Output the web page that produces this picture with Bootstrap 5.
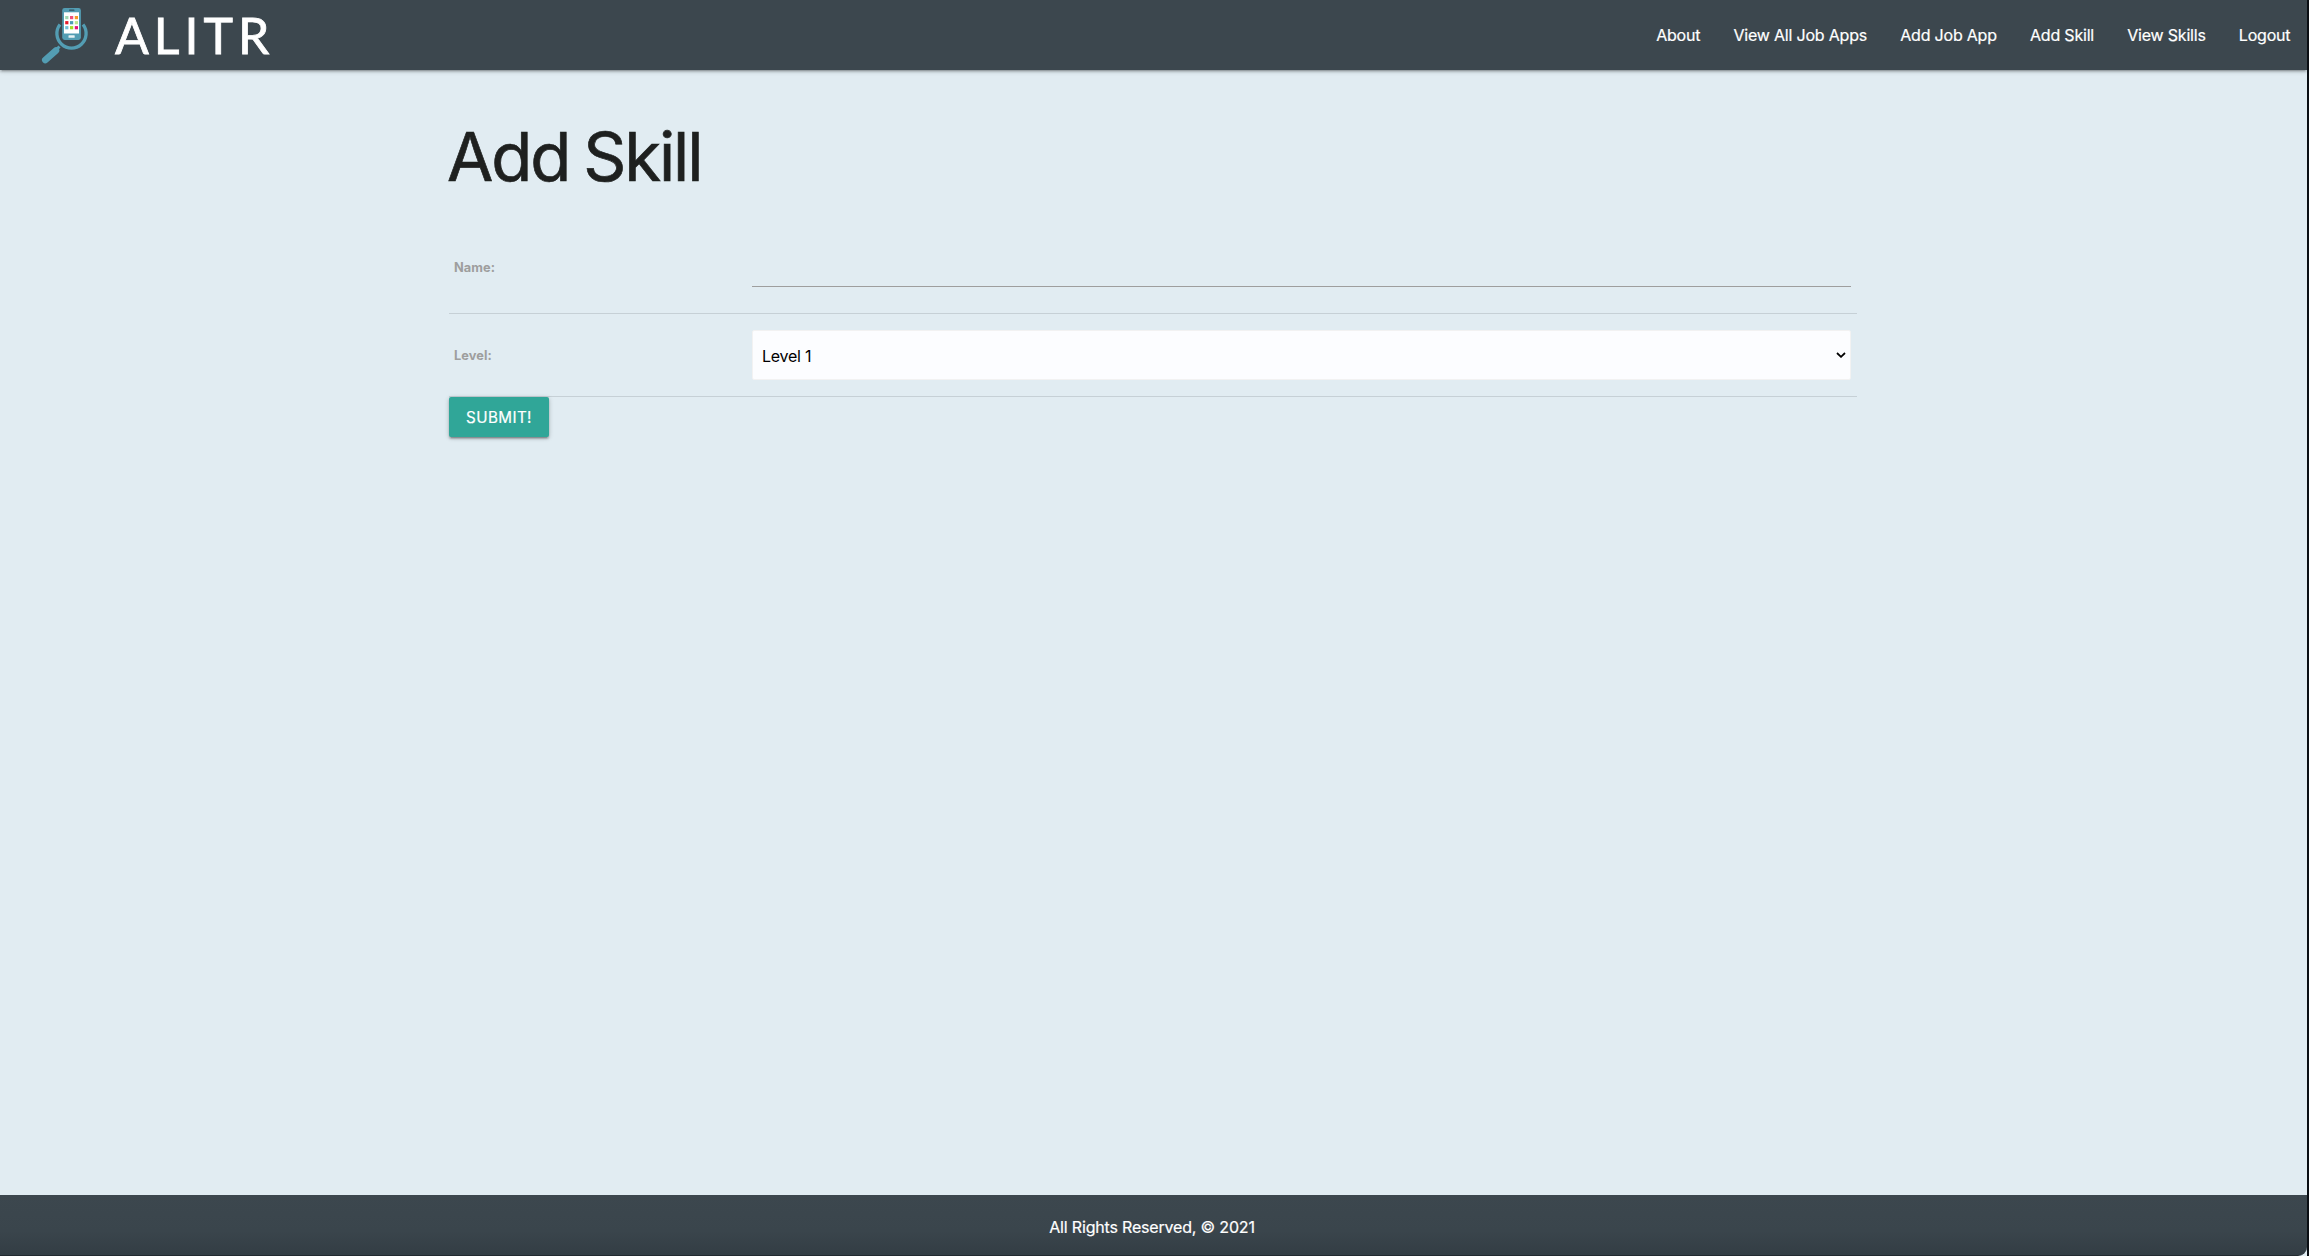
<!DOCTYPE html>
<html lang="en">
<head>
<meta charset="utf-8">
<meta name="viewport" content="width=device-width, initial-scale=1">
<title>ALITR - Add Skill</title>
<link rel="stylesheet" href="https://cdn.jsdelivr.net/npm/bootstrap@5.3.0/dist/css/bootstrap.min.css">
<style>
body{background:#e1ecf2;font-family:Inter,"Liberation Sans",sans-serif;font-size:16px;color:#1e201f;border-right:2px solid #0b0f14;letter-spacing:-.2px}
.topbar{background:#3c474e;height:70px;padding:0 0 0 30px;box-shadow:0 2px 2px rgba(0,0,0,.14),0 3px 1px -2px rgba(0,0,0,.12),0 1px 5px rgba(0,0,0,.2)}
.logo-mark{width:70px;height:70px;flex:none}
.brand-word{font-family:Lato,sans-serif;font-size:50px;line-height:70px;letter-spacing:5px;margin-left:15px;-webkit-text-stroke:.8px #fff}
.topbar .nav-link{padding:0 16.6px;line-height:70px;color:#fff;white-space:nowrap;-webkit-text-stroke:.2px #fff}
.page-col{width:1408px;margin-left:449px}
.page-title{font-size:67.2px;line-height:74px;font-weight:400;margin:50px 0 -1px -2px;letter-spacing:-2.1px;word-spacing:-3px;-webkit-text-stroke:.7px #1e201f}
.field-row{border-bottom:1px solid #c6d0d6;padding:0 6px 0 5px}
.row-name{height:93px}
.row-level{height:83px}
.field-label{width:298px;flex:none;font-size:12.8px;font-weight:700;color:#9e9e9e;letter-spacing:.05px;padding-top:2px}
.line-input{height:48px;border:0;border-bottom:1px solid #9e9e9e;border-radius:0;background:transparent;box-shadow:none;padding:0;margin-top:-9px}
.level-select{height:50px;border:1px solid #f2f2f2;border-radius:2px;background-color:#fcfdff;color:#000;padding:2px 9px 0;font-size:16px;letter-spacing:-.25px;background-image:url("data:image/svg+xml,%3Csvg xmlns='http://www.w3.org/2000/svg' viewBox='0 0 10 6'%3E%3Cpath d='M1 1l4 3.8L9 1' fill='none' stroke='%23000' stroke-width='1.8'/%3E%3C/svg%3E");background-size:10px 6px;background-position:right 4px center}
.submit-btn{width:100px;height:40px;background:#30a698;color:#fff;border:0;border-radius:2px;font-size:15.2px;letter-spacing:.4px;padding:2px 0 0;-webkit-text-stroke:.2px #fff;box-shadow:0 2px 2px rgba(0,0,0,.2),0 3px 1px -2px rgba(0,0,0,.15),0 1px 5px rgba(0,0,0,.2)}
.bottom-bar{height:61px;background:linear-gradient(#3c474e,#3a454c 60%,#333d44);color:#fff;padding:4px 3px 0 0;letter-spacing:-.18px;-webkit-text-stroke:.2px #fff;border-bottom:1px solid #222a30;border-bottom-right-radius:9px}
</style>
<script src="https://cdn.jsdelivr.net/npm/bootstrap@5.3.0/dist/js/bootstrap.bundle.min.js"></script>
</head>
<body class="d-flex flex-column min-vh-100">
<header class="topbar d-flex align-items-center">
  <a href="#" class="d-flex align-items-center text-white text-decoration-none">
    <svg class="logo-mark" viewBox="0 0 70 70" aria-hidden="true">
      <path d="M30 24.5A14.6 14.6 0 1 0 53 24.5" fill="none" stroke="#539db3" stroke-width="3.3"/>
      <path d="M29.5 46.5L26.5 49.5" stroke="#539db3" stroke-width="3"/>
      <path d="M26 50.5L15.3 60" stroke="#539db3" stroke-width="6.6" stroke-linecap="round"/>
      <rect x="32.2" y="8" width="18.7" height="32" rx="2.4" fill="#539db3"/>
      <rect x="39" y="9.6" width="5.5" height="1.2" rx=".6" fill="#35515e"/>
      <rect x="34" y="12.3" width="15" height="21.2" fill="#fff"/>
      <rect x="38.5" y="35.2" width="6.2" height="2.5" rx=".5" fill="#e6f2f5"/>
      <g><rect x="35.2" y="16" width="3.2" height="3.2" fill="#9fd8b0"/><rect x="40" y="16" width="3.2" height="3.2" fill="#f0517b"/><rect x="44.8" y="16" width="3.2" height="3.2" fill="#f59b26"/>
      <rect x="35.2" y="21.1" width="3.2" height="3.2" fill="#e51b2b"/><rect x="40" y="21.1" width="3.2" height="3.2" fill="#4b9db4"/><rect x="44.8" y="21.1" width="3.2" height="3.2" fill="#bce58f"/>
      <rect x="35.2" y="26.1" width="3.2" height="3.2" fill="#70bed7"/><rect x="40" y="26.1" width="3.2" height="3.2" fill="#a5dc25"/><rect x="44.8" y="26.1" width="3.2" height="3.2" fill="#e8127c"/></g>
    </svg>
    <span class="brand-word">ALITR</span>
  </a>
  <nav class="nav flex-nowrap ms-auto">
    <a class="nav-link" href="#">About</a>
    <a class="nav-link" href="#">View All Job Apps</a>
    <a class="nav-link" href="#">Add Job App</a>
    <a class="nav-link" href="#">Add Skill</a>
    <a class="nav-link" href="#">View Skills</a>
    <a class="nav-link" href="#">Logout</a>
  </nav>
</header>
<main class="flex-grow-1">
  <div class="page-col">
    <h1 class="page-title">Add Skill</h1>
    <form class="pt-4 mt-1">
      <div class="field-row row-name d-flex align-items-center">
        <label class="field-label" for="skillName">Name:</label>
        <input class="form-control line-input" id="skillName" type="text">
      </div>
      <div class="field-row row-level d-flex align-items-center">
        <label class="field-label" for="skillLevel">Level:</label>
        <select class="form-select level-select" id="skillLevel"><option>Level 1</option></select>
      </div>
      <button class="btn submit-btn text-uppercase d-block" type="button">Submit!</button>
    </form>
  </div>
</main>
<footer class="bottom-bar d-flex align-items-center justify-content-center">All Rights Reserved, © 2021</footer>
</body>
</html>
